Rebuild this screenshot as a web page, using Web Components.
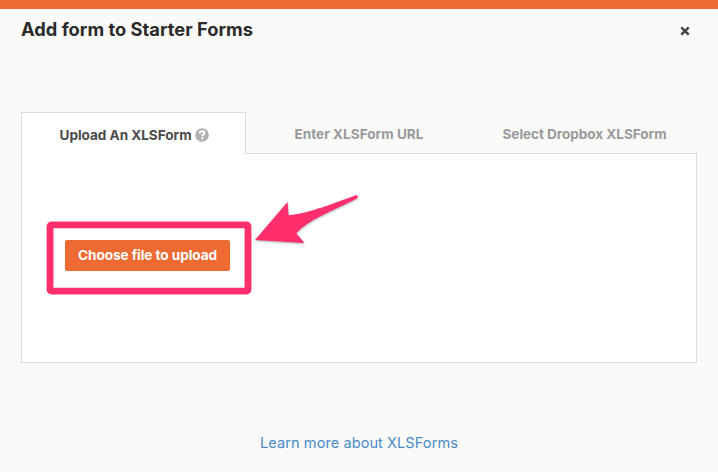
<!DOCTYPE html>
<html lang="en">
<head>
<meta charset="utf-8">
<title>Add form</title>
<style>
html,body{margin:0;height:100%}
body{font-family:Inter,Roboto,"Liberation Sans",sans-serif;background:#fafaf8;overflow:hidden}
</style>
</head>
<body>
<form-dialog>
  <fit-text slot="title" width="232">Add form to Starter Forms</fit-text>
  <tab-panel slot="body">
    <tab-item slot="tabs" active><fit-text width="132">Upload An XLSForm</fit-text><help-icon></help-icon></tab-item>
    <tab-item slot="tabs"><fit-text width="129">Enter XLSForm URL</fit-text></tab-item>
    <tab-item slot="tabs"><fit-text width="164">Select Dropbox XLSForm</fit-text></tab-item>
    <upload-button><fit-text width="139">Choose file to upload</fit-text></upload-button>
  </tab-panel>
  <fit-text slot="footer" width="198">Learn more about XLSForms</fit-text>
</form-dialog>
<callout-mark></callout-mark>
<script>
const define = (name, html, init) => customElements.define(name, class extends HTMLElement {
  constructor() {
    super();
    this.attachShadow({mode: 'open'}).innerHTML = html;
  }
  connectedCallback() { if (init) init(this); }
});

define('form-dialog', `<style>
:host{display:flex;flex-direction:column;box-sizing:border-box;height:472px;border-top:9px solid #ed6b33;background:#fafaf8}
header{display:flex;box-sizing:border-box;justify-content:space-between;align-items:center;height:41px;padding:0 28px 2px 21px;color:#2b2b2b;font-weight:650;font-size:18.3px}
svg{display:block;width:10px;height:10px;margin-top:4px}
main{padding:62px 21px 0}
footer{display:flex;justify-content:center;margin-top:70px;font-size:14.6px;line-height:20px;color:#4a8bc9}
</style>
<header><slot name="title"></slot><svg viewBox="0 0 10 10" aria-label="Close"><path d="M1.3 1.3 8.7 8.7M8.7 1.3 1.3 8.7" stroke="#444" stroke-width="2.4"/></svg></header>
<main><slot name="body"></slot></main>
<footer><slot name="footer"></slot></footer>`);

define('tab-panel', `<style>
:host{display:block}
nav{display:grid;grid-template-columns:225px 226px 225px;height:42px;position:relative;z-index:1}
section{box-sizing:border-box;height:210px;margin-top:-1px;border:1px solid #dadbdb;background:#fff;padding:86px 43px}
</style><nav><slot name="tabs"></slot></nav><section><slot></slot></section>`);

define('tab-item', `<style>
:host{display:flex;box-sizing:border-box;justify-content:center;align-items:center;gap:4px;height:41px;padding-top:3px;font-weight:650;font-size:13.6px;color:#999a9a}
:host([active]){height:42px;gap:3px;padding-top:2px;padding-left:1px;border:1px solid #dadbdb;border-bottom:0;background:#fff;color:#4b4b4b}
</style><slot></slot>`);

define('help-icon', `<style>:host,svg{display:block;width:14px;height:14px}</style>
<svg viewBox="0 0 14 14"><circle cx="7" cy="7" r="6.8" fill="#b1b1b1"/><path d="M4.7 5.3C4.9 3.8 5.9 3.2 7.1 3.2c1.3 0 2.3.7 2.3 1.9C9.4 6.6 7.3 6.5 7.3 8.3" fill="none" stroke="#fff" stroke-width="2"/><path d="M6.2 9.3h2.1v2h-2.1z" fill="#fff"/></svg>`);

define('upload-button', `<style>
:host{display:flex;box-sizing:border-box;width:165px;height:31px;padding-bottom:2px;justify-content:center;align-items:center;background:#ed6b33;border-radius:2px;color:#fff;font-weight:700;font-size:13.6px}
</style><slot></slot>`);

define('callout-mark', `<style>
:host{position:absolute;left:0;top:0;z-index:2;pointer-events:none}
svg{display:block;filter:drop-shadow(0 1px 1px #0005)}
svg.box{filter:none;position:absolute;left:0;top:0}
</style>
<svg width="718" height="472"><path d="M255 240 287.5 202 288.6 215.2C303 214.5 329 205.5 355.7 195.2 358 194.7 358.6 197.4 356.8 198.5 331 212 310 218.5 296.3 233.3L304.5 243Z" fill="#ff2e6c"/></svg>
<svg class="box" width="718" height="472"><rect x="50" y="224.9" width="198" height="66.2" rx="1.5" fill="none" stroke="#ff2e6c" stroke-width="6.9" stroke-linejoin="round"/></svg>`);

// Spreads the letters evenly so that the label fills the given width.
define('fit-text', `<style>:host{display:block;white-space:nowrap}span{display:inline-block}</style><span><slot></slot></span>`, el => {
  const span = el.shadowRoot.querySelector('span');
  const target = +el.getAttribute('width');
  span.style.letterSpacing = '0';
  const gap = (target - span.getBoundingClientRect().width) / el.textContent.length;
  span.style.letterSpacing = gap + 'px';
  el.style.width = target + 'px';
});
document.querySelectorAll('fit-text').forEach(el => el.connectedCallback());
</script>
</body>
</html>
